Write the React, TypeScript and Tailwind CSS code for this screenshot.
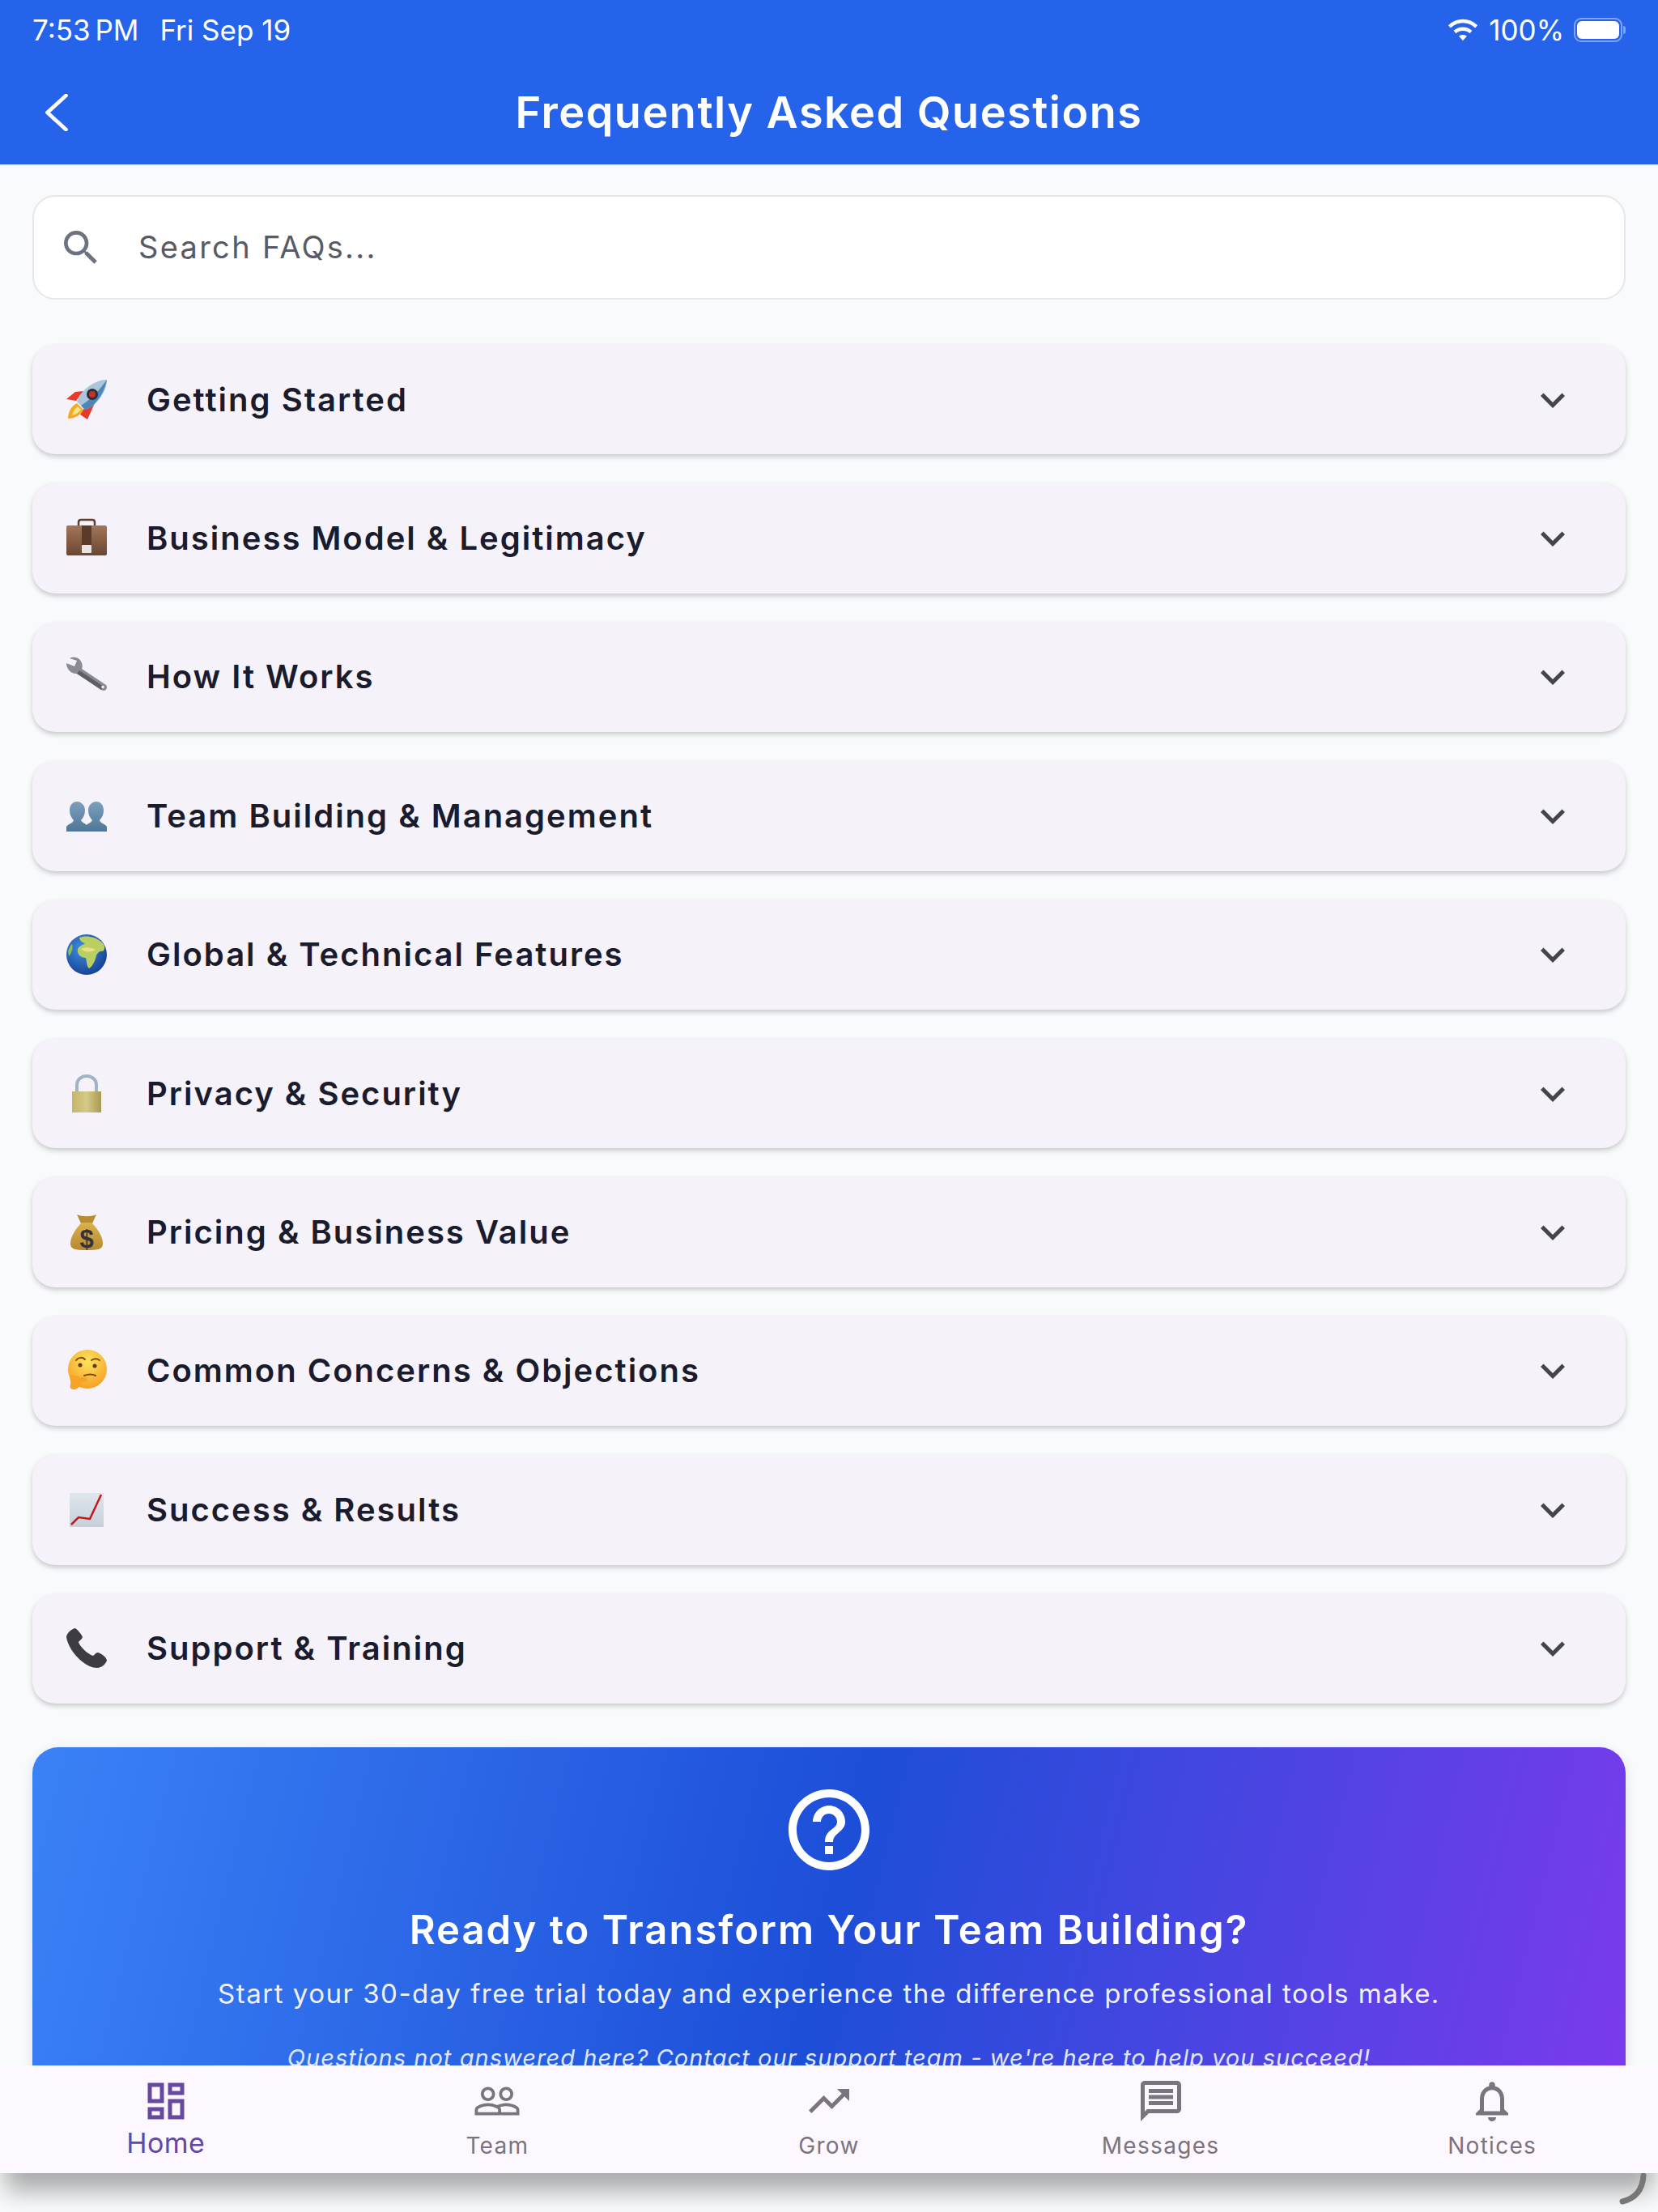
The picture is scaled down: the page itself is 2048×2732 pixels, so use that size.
import React from 'react';
import {
  MdOutlineDashboard,
  MdPeopleOutline,
  MdTrendingUp,
  MdOutlineMessage,
  MdNotificationsNone,
  MdHelpOutline,
  MdSearch,
  MdKeyboardArrowDown,
} from 'react-icons/md';

const Rocket = () => (
  <svg viewBox="0 0 52 52" className="w-[52px] h-[52px]">
    <path d="M1 25 L12 16 L22 15 L13 27 Z" fill="#e8392b" />
    <path d="M27 30 L36 30 L27 50 L18 44 Z" fill="#e8392b" />
    <path d="M3 49 C3 40 8 33 14 30 L22 38 C18 45 11 49 3 49 Z" fill="#f7a823" />
    <path d="M8 45 C9 40 12 36 15 34 L19 38 C16 42 12 44 8 45 Z" fill="#fde68a" />
    <path d="M51 1 C40 1 26 8 17 21 L14 28 L24 38 L31 35 C44 26 51 12 51 1 Z" fill="#a9c6da" />
    <path d="M51 1 C49 13 42 26 31 35 L24 38 L19 33 C30 26 42 14 51 1 Z" fill="#4d86b8" />
    <circle cx="33" cy="19" r="7" fill="#2b2f38" />
    <circle cx="33" cy="19" r="4" fill="#c8302a" />
  </svg>
);

const Briefcase = () => (
  <svg viewBox="0 0 52 52" className="w-[52px] h-[52px]">
    <defs>
      <linearGradient id="caseFill" x1="0" y1="0" x2="0" y2="1">
        <stop offset="0" stopColor="#a2765a" />
        <stop offset="1" stopColor="#6b4632" />
      </linearGradient>
    </defs>
    <path d="M16 11 V6 Q16 3 19 3 H33 Q36 3 36 6 V11" fill="none" stroke="#5c3f2e" strokeWidth="2.500" />
    <rect x="1" y="10" width="50" height="37" rx="2" fill="url(#caseFill)" />
    <rect x="20" y="10" width="12" height="26" fill="#5b3a29" />
    <rect x="20" y="34" width="12" height="10" rx="1" fill="#e8e4e2" />
  </svg>
);

const Wrench = () => (
  <svg viewBox="0 0 52 52" className="w-[52px] h-[52px]">
    <path d="M1 9 L11 13 L14 6 L5 3 C10 0 18 2 20 9 C21 12 21 14 20 16 L50 36 C52 38 51 43 47 43 C46 43 45 42 44 42 L14 22 C8 23 1 17 1 9 Z" fill="#8b8a93" />
    <path d="M17 18 L47 38 L44 42 L14 22 Z" fill="#5f5d66" />
    <circle cx="46" cy="38.500" r="1.800" fill="#f5f1f8" />
  </svg>
);

const Busts = () => (
  <svg viewBox="0 0 52 52" className="w-[52px] h-[52px]">
    <defs>
      <linearGradient id="bustFill" x1="0" y1="0" x2="0" y2="1">
        <stop offset="0" stopColor="#7ba0bd" />
        <stop offset="1" stopColor="#4f7698" />
      </linearGradient>
    </defs>
    <path d="M1 45 V39 C4 35 9 35 10 31 C7 28 5 24 5 19 C5 12 9 8 14 8 C19 8 24 12 24 19 C24 24 22 28 19 31 C21 35 25 35 26 37 C27 35 31 35 33 31 C30 28 28 24 28 19 C28 12 33 8 38 8 C43 8 47 12 47 19 C47 24 45 28 42 31 C43 35 48 35 51 39 V45 Z" fill="url(#bustFill)" />
  </svg>
);

const Globe = () => (
  <svg viewBox="0 0 52 52" className="w-[52px] h-[52px]">
    <defs>
      <radialGradient id="globeFill" cx="0.4" cy="0.35" r="0.75">
        <stop offset="0" stopColor="#3f8fe0" />
        <stop offset="1" stopColor="#123a8c" />
      </radialGradient>
    </defs>
    <circle cx="26" cy="26" r="25" fill="url(#globeFill)" />
    <path d="M17 5 C24 2 36 3 44 10 C50 15 49 21 45 22 C42 21 40 24 38 27 C37 33 33 41 29 43 C26 41 26 34 25 30 C19 30 14 26 15 19 C17 15 22 14 24 12 C20 11 17 8 17 5 Z" fill="#b9cf62" />
    <path d="M19 19 C24 16 33 17 37 20 C33 23 24 24 19 19 Z" fill="#ecdf87" />
    <path d="M3 22 C4 18 6 14 8 13 C10 18 7 25 4 28 Z" fill="#8dbb5a" />
  </svg>
);

const Padlock = () => (
  <svg viewBox="0 0 52 52" className="w-[52px] h-[52px]">
    <defs>
      <linearGradient id="lockFill" x1="0" y1="0" x2="1" y2="0">
        <stop offset="0" stopColor="#c3b669" />
        <stop offset="0.5" stopColor="#d4c987" />
        <stop offset="1" stopColor="#a89a52" />
      </linearGradient>
    </defs>
    <path d="M14 26 V15 C14 8 20 4 26 4 C32 4 38 8 38 15 V26" fill="none" stroke="#9fb5c6" strokeWidth="4" />
    <rect x="8" y="23" width="36" height="26" fill="url(#lockFill)" />
  </svg>
);

const MoneyBag = () => (
  <svg viewBox="0 0 52 52" className="w-[52px] h-[52px]">
    <defs>
      <linearGradient id="bagFill" x1="0" y1="0" x2="0" y2="1">
        <stop offset="0" stopColor="#dcb04a" />
        <stop offset="1" stopColor="#b58a32" />
      </linearGradient>
    </defs>
    <path d="M14 4 C20 7 32 7 38 4 L33 15 H19 Z" fill="#b98c34" />
    <path d="M20 14 H32 C38 20 46 30 46 40 C46 47 40 48 26 48 C12 48 6 47 6 40 C6 30 14 20 20 14 Z" fill="url(#bagFill)" />
    <text x="26" y="45" textAnchor="middle" fontSize="31" fontWeight="700" fontFamily="'Liberation Sans', sans-serif" fill="#333338">$</text>
  </svg>
);

const Thinking = () => (
  <svg viewBox="0 0 52 52" className="w-[52px] h-[52px]">
    <defs>
      <radialGradient id="faceFill" cx="0.5" cy="0.3" r="0.8">
        <stop offset="0" stopColor="#fde25e" />
        <stop offset="1" stopColor="#f5971f" />
      </radialGradient>
    </defs>
    <circle cx="27" cy="24" r="24" fill="url(#faceFill)" />
    <path d="M13 13 C16 9 21 9 24 12 M32 13 C35 11 39 11 42 13" fill="none" stroke="#7a4a10" strokeWidth="2" strokeLinecap="round" />
    <circle cx="18" cy="19" r="2.500" fill="#5e3a0d" />
    <circle cx="36" cy="20" r="2.500" fill="#5e3a0d" />
    <path d="M23 32 C28 30 33 30 37 32" fill="none" stroke="#7a4a10" strokeWidth="2" strokeLinecap="round" />
    <path d="M5 32 C9 30 14 33 19 34 C24 34 28 35 27 38 C25 40 22 40 20 40 C19 45 14 50 9 49 C6 49 5 46 6 43 C7 39 5 36 5 32 Z" fill="#f6a326" />
  </svg>
);

const ChartUp = () => (
  <svg viewBox="0 0 52 52" className="w-[52px] h-[52px]">
    <defs>
      <linearGradient id="chartFill" x1="0" y1="0" x2="0" y2="1">
        <stop offset="0" stopColor="#dfe6ec" />
        <stop offset="1" stopColor="#c6d0d8" />
      </linearGradient>
    </defs>
    <rect x="5" y="5" width="42" height="42" fill="url(#chartFill)" />
    <path d="M7 44 L16 35 L30 37 L44 7" fill="none" stroke="#c5161d" strokeWidth="2.500" />
  </svg>
);

const Phone = () => (
  <svg viewBox="0 0 52 52" className="w-[52px] h-[52px]">
    <path d="M1 12 C1 8 6 3 11 1 C14 1 20 9 21 12 C20 15 17 16 16 18 C18 24 27 33 34 35 C36 34 37 31 40 31 C44 32 51 37 51 41 C49 46 44 50 39 50 C24 50 4 30 1 12 Z" fill="#3c3c42" />
  </svg>
);

const categories = [
  { icon: <Rocket />, title: 'Getting Started' },
  { icon: <Briefcase />, title: 'Business Model & Legitimacy' },
  { icon: <Wrench />, title: 'How It Works' },
  { icon: <Busts />, title: 'Team Building & Management' },
  { icon: <Globe />, title: 'Global & Technical Features' },
  { icon: <Padlock />, title: 'Privacy & Security' },
  { icon: <MoneyBag />, title: 'Pricing & Business Value' },
  { icon: <Thinking />, title: 'Common Concerns & Objections' },
  { icon: <ChartUp />, title: 'Success & Results' },
  { icon: <Phone />, title: 'Support & Training' },
];

const tabs = [
  { icon: MdOutlineDashboard, label: 'Home', active: true },
  { icon: MdPeopleOutline, label: 'Team', active: false },
  { icon: MdTrendingUp, label: 'Grow', active: false },
  { icon: MdOutlineMessage, label: 'Messages', active: false },
  { icon: MdNotificationsNone, label: 'Notices', active: false },
];

const App: React.FC = () => {
  return (
    <div className="relative w-[2048px] h-[2732px] overflow-hidden bg-[#f9fafb] font-['Inter',sans-serif]">
      <header className="h-[204px] bg-[#2563eb] text-white border-b border-[#dfe3ea]">
        <div className="h-[74px] px-10 flex items-center justify-between text-[35px] leading-none">
          <div className="flex gap-[26px]">
            <span className="[word-spacing:-4px]">7:53 PM</span>
            <span>Fri Sep 19</span>
          </div>
          <div className="flex items-center gap-[12px]">
            <svg viewBox="0 0 24 24" className="w-[40px] h-[40px]" fill="none" stroke="currentColor" strokeWidth="2.600">
              <path d="M2 9.500 C8 4 16 4 22 9.500" />
              <path d="M6 13.500 C9.500 10.500 14.500 10.500 18 13.500" />
              <path d="M12 20 L9 16.500 C10.500 15.200 13.500 15.200 15 16.500 Z" fill="currentColor" stroke="none" />
            </svg>
            <span>100%</span>
            <div className="flex items-center">
              <div className="w-[60px] h-[30px] rounded-[9px] border-2 border-[#7ea3f3] p-[2px]">
                <div className="w-full h-full rounded-[6px] bg-white" />
              </div>
              <div className="w-[3px] h-[10px] rounded-r-full bg-[#7ea3f3] ml-[1px]" />
            </div>
          </div>
        </div>
        <div className="relative h-[130px] flex items-center justify-center">
          <svg viewBox="0 0 28 44" className="absolute left-[55px] top-[42px] w-[30px] h-[46px]" fill="none" stroke="currentColor" strokeWidth="4.500" strokeLinecap="round" strokeLinejoin="round">
            <path d="M25 2 L3 22 L25 42" />
          </svg>
          <h1 className="text-[54px] font-semibold tracking-[1.500px] leading-none">Frequently Asked Questions</h1>
        </div>
      </header>

      <main className="px-10 pt-[37px]">
        <div className="h-[129px] bg-white rounded-[28px] border-2 border-[#e5e7eb] flex items-center pl-[30px]">
          <MdSearch className="w-[56px] h-[56px] text-[#6b7280]" />
          <span className="ml-[43px] text-[38px] tracking-[2.300px] text-[#585b66]">Search FAQs...</span>
        </div>

        <div className="mt-[56px] flex flex-col gap-[36px]">
          {categories.map((cat) => (
            <div
              key={cat.title}
              className="h-[135.400px] bg-[#f6f2f9] rounded-[28px] flex items-center pl-[41px] pr-[60px] shadow-[0_3px_6px_rgba(0,0,0,0.2)]"
            >
              {cat.icon}
              <span className="ml-[48px] flex-1 text-[40px] font-semibold tracking-[2px] text-[#1a1c2e]">{cat.title}</span>
              <MdKeyboardArrowDown className="w-[60px] h-[60px] text-[#44444c]" />
            </div>
          ))}
        </div>

        <section className="mt-[54px] h-[470px] rounded-[32px] bg-[linear-gradient(104deg,#3b82f6,#1d4ed8_50%,#7c3aed)] text-white flex flex-col items-center pt-[42px] shadow-[0_4px_16px_rgba(0,0,0,0.1)]">
          <MdHelpOutline className="w-[120px] h-[120px]" />
          <h2 className="mt-[34px] text-[49px] font-semibold tracking-[2px] leading-[60px]">Ready to Transform Your Team Building?</h2>
          <p className="mt-[26px] text-[33px] tracking-[1.500px] leading-[44px] text-[#eef2fe]">
            Start your 30-day free trial today and experience the difference professional tools make.
          </p>
          <p className="mt-[38px] text-[29px] italic tracking-[1.050px] leading-[40px] text-[#dfe6fb]">
            Questions not answered here? Contact our support team - we're here to help you succeed!
          </p>
        </section>
      </main>

      <nav className="absolute left-0 right-0 top-[2551px] h-[133px] bg-[#fdf7ff] flex shadow-[0_28px_28px_-6px_rgba(0,0,0,0.32)]">
        {tabs.map((tab) => {
          const Icon = tab.icon;
          return (
            <div
              key={tab.label}
              className={`flex-1 flex flex-col items-center pt-[14px] ${tab.active ? 'text-[#65489f]' : 'text-[#79747e]'}`}
            >
              <Icon className="w-[60px] h-[60px]" />
              <span className={tab.active ? 'mt-[2px] text-[34px] leading-[40px] tracking-[0.500px]' : 'mt-[7px] text-[28px] leading-[36px] tracking-[1.300px]'}>
                {tab.label}
              </span>
            </div>
          );
        })}
      </nav>

      <svg viewBox="0 0 40 40" className="absolute left-[1995px] top-[2684px] w-[40px] h-[40px]" fill="none" stroke="#777" strokeWidth="7" strokeLinecap="round">
        <path d="M35 3 C34 20 26 31 9 35" />
      </svg>
    </div>
  );
};

export default App;
